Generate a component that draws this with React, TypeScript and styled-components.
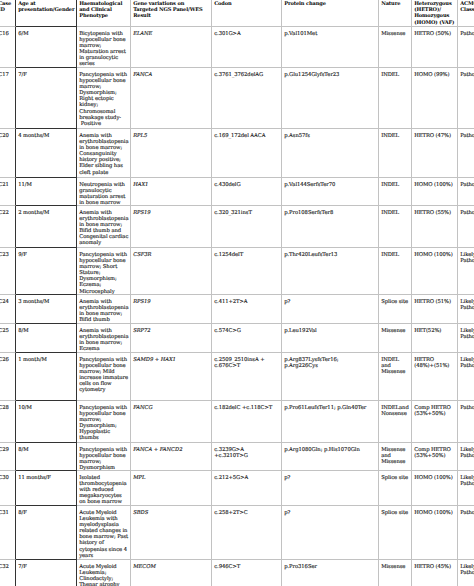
import React from "react";
import styled, { createGlobalStyle } from "styled-components";

const GlobalStyle = createGlobalStyle`
  html, body { margin: 0; padding: 0; background: #ffffff; overflow: hidden; }
  * { box-sizing: border-box; }
`;

const COLS = "20px 61px 54px 81px 70px 97px 33px 46px 60px";

const Viewport = styled.div`
  width: 474px;
  height: 586px;
  overflow: hidden;
  background: #fff;
`;

const Table = styled.div`
  display: flex;
  flex-direction: column;
  margin-left: -4px;
  margin-top: -5px;
  width: 522px;
  font-family: "DejaVu Serif", "Liberation Serif", serif;
  color: #141414;
`;

const Row = styled.div<{ $h: number }>`
  display: grid;
  grid-template-columns: ${COLS};
  height: ${(p) => p.$h}px;
  flex: none;
`;

const Cell = styled.div<{ $dark?: boolean; $darkLeft?: boolean }>`
  border-right: 1px solid ${(p) => (p.$dark || p.$darkLeft ? "#333" : "#c2c2c2")};
  border-bottom: 1px solid ${(p) => (p.$dark ? "#333" : "#c2c2c2")};
  padding: 3px 0 0 2.2px;
  font-size: 5.25px;
  line-height: 6.1px;
  letter-spacing: -0.07px;
  white-space: pre;
  overflow: hidden;
  -webkit-text-stroke: 0.12px currentColor;
`;

const HeadCell = styled(Cell)`
  font-weight: bold;
  color: #0a0a0a;
  padding-top: 5px;
  font-size: 5.1px;
  line-height: 6.2px;
  letter-spacing: -0.14px;
  -webkit-text-stroke: 0;
`;

const Gene = styled.span`
  font-style: italic;
`;

type RowData = {
  id: string;
  h: number;
  age: string;
  ph: string;
  gene: React.ReactNode;
  codon: string;
  prot: string;
  nat: string;
  zyg: string;
  acmg: string;
};

const LP = "Likely\nPathogenic";
const P = "Pathogenic";

const rows: RowData[] = [
  { id: "C16", h: 41, age: "6/M", ph: "Bicytopenia with\nhypocellular bone\nmarrow;\nMaturation arrest\nin granulocytic\nseries", gene: <Gene>ELANE</Gene>, codon: "c.301G>A", prot: "p.Val101Met", nat: "Missense", zyg: "HETRO (50%)", acmg: P },
  { id: "C17", h: 61, age: "7/F", ph: "Pancytopenia with\nhypocellular bone\nmarrow;\nDysmorphism;\nRight ectopic\nkidney;\nChromosomal\nbreakage study-\n Positive", gene: <Gene>FANCA</Gene>, codon: "c.3761_3762delAG", prot: "p.Glu1254GlyfsTer23", nat: "INDEL", zyg: "HOMO (99%)", acmg: P },
  { id: "C20", h: 49, age: "4 months/M", ph: "Anemia with\nerythroblastopenia\nin bone marrow;\nConsanguinity\nhistory positive;\nElder sibling has\ncleft palate", gene: <Gene>RPL5</Gene>, codon: "c.169_172del AACA", prot: "p.Asn57fs", nat: "INDEL", zyg: "HETRO (47%)", acmg: P },
  { id: "C21", h: 28, age: "11/M", ph: "Neutropenia with\ngranulocytic\nmaturation arrest\nin bone marrow", gene: <Gene>HAX1</Gene>, codon: "c.430delG", prot: "p.Val144SerfsTer70", nat: "INDEL", zyg: "HOMO (100%)", acmg: P },
  { id: "C22", h: 42, age: "2 months/M", ph: "Anemia with\nerythroblastopenia\nin bone marrow;\nBifid thumb and\nCongenital cardiac\nanomaly", gene: <Gene>RPS19</Gene>, codon: "c.320_321insT", prot: "p.Pro108SerfsTer8", nat: "INDEL", zyg: "HETRO (55%)", acmg: P },
  { id: "C23", h: 47, age: "9/F", ph: "Pancytopenia with\nhypocellular bone\nmarrow; Short\nStature;\nDysmorphism;\nEczema;\nMicrocephaly", gene: <Gene>CSF3R</Gene>, codon: "c.1254delT", prot: "p.Thr420LeufsTer13", nat: "INDEL", zyg: "HOMO (100%)", acmg: LP },
  { id: "C24", h: 29, age: "3 months/M", ph: "Anemia with\nerythroblastopenia\nin bone marrow;\nBifid thumb", gene: <Gene>RPS19</Gene>, codon: "c.411+2T>A", prot: "p?", nat: "Splice site", zyg: "HETRO (51%)", acmg: LP },
  { id: "C25", h: 29, age: "8/M", ph: "Anemia with\nerythroblastopenia\nin bone marrow;\nEczema", gene: <Gene>SRP72</Gene>, codon: "c.574C>G", prot: "p.Leu192Val", nat: "Missense", zyg: "HET(52%)", acmg: LP },
  { id: "C26", h: 48, age: "1 month/M", ph: "Pancytopenia with\nhypocellular bone\nmarrow; Mild\nincrease immature\ncells on flow\ncytometry", gene: <><Gene>SAMD9</Gene> + <Gene>HAX1</Gene></>, codon: "c.2509_2510insA +\nc.676C>T", prot: "p.Arg837LysfsTer16;\np.Arg226Cys", nat: "INDEL\nand\nMissense", zyg: "HETRO\n(48%)+(51%)", acmg: LP },
  { id: "C28", h: 42, age: "10/M", ph: "Pancytopenia with\nhypocellular bone\nmarrow;\nDysmorphism;\nHypoplastic\nthumbs", gene: <Gene>FANCG</Gene>, codon: "c.182delC +c.118C>T", prot: "p.Pro61LeufsTer11; p.Gln40Ter", nat: "INDELand\nNonsense", zyg: "Comp HETRO\n(53%+50%)", acmg: P },
  { id: "C29", h: 28, age: "8/M", ph: "Pancytopenia with\nhypocellular bone\nmarrow;\nDysmorphism", gene: <><Gene>FANCA</Gene> + <Gene>FANCD2</Gene></>, codon: "c.3239G>A\n+c.3210T>G", prot: "p.Arg1080Gln; p.His1070Gln", nat: "Missense\nand\nMissense", zyg: "Comp HETRO\n(53%+50%)", acmg: LP },
  { id: "C30", h: 35, age: "11 months/F", ph: "Isolated\nthrombocytopenia\nwith reduced\nmegakaryocytes\non bone marrow", gene: <Gene>MPL</Gene>, codon: "c.212+5G>A", prot: "p?", nat: "Splice site", zyg: "HOMO (100%)", acmg: LP },
  { id: "C31", h: 54, age: "8/F", ph: "Acute Myeloid\nLeukemia with\nmyelodysplasia\nrelated changes in\nbone marrow; Past\nhistory of\ncytopenias since 4\nyears", gene: <Gene>SBDS</Gene>, codon: "c.258+2T>C", prot: "p?", nat: "Splice site", zyg: "HOMO (100%)", acmg: P },
  { id: "C32", h: 60, age: "7/F", ph: "Acute Myeloid\nLeukemia;\nClinodactyly;\nThenar atrophy\nof both hands", gene: <Gene>MECOM</Gene>, codon: "c.946C>T", prot: "p.Pro316Ser", nat: "Missense", zyg: "HETRO (45%)", acmg: LP },
];

const headers = [
  "Case\nID",
  "Age at\npresentation/Gender",
  "Haematological\nand Clinical\nPhenotype",
  "Gene variations on\nTargeted NGS Panel/WES\nResult",
  "Codon",
  "Protein change",
  "Nature",
  "Heterozygous\n(HETRO)/\nHomozygous\n(HOMO) (VAF)",
  "ACMG\nClassification",
];

export default function App() {
  return (
    <Viewport>
      <GlobalStyle />
      <Table>
        <Row $h={32}>
          {headers.map((h, i) => (
            <HeadCell key={i} $dark={i === 1} $darkLeft={i === 0}>
              {h}
            </HeadCell>
          ))}
        </Row>
        {rows.map((r) => (
          <Row key={r.id} $h={r.h}>
            <Cell $darkLeft>{r.id}</Cell>
            <Cell $dark>{r.age}</Cell>
            <Cell>{r.ph}</Cell>
            <Cell>{r.gene}</Cell>
            <Cell>{r.codon}</Cell>
            <Cell>{r.prot}</Cell>
            <Cell>{r.nat}</Cell>
            <Cell>{r.zyg}</Cell>
            <Cell>{r.acmg}</Cell>
          </Row>
        ))}
      </Table>
    </Viewport>
  );
}
